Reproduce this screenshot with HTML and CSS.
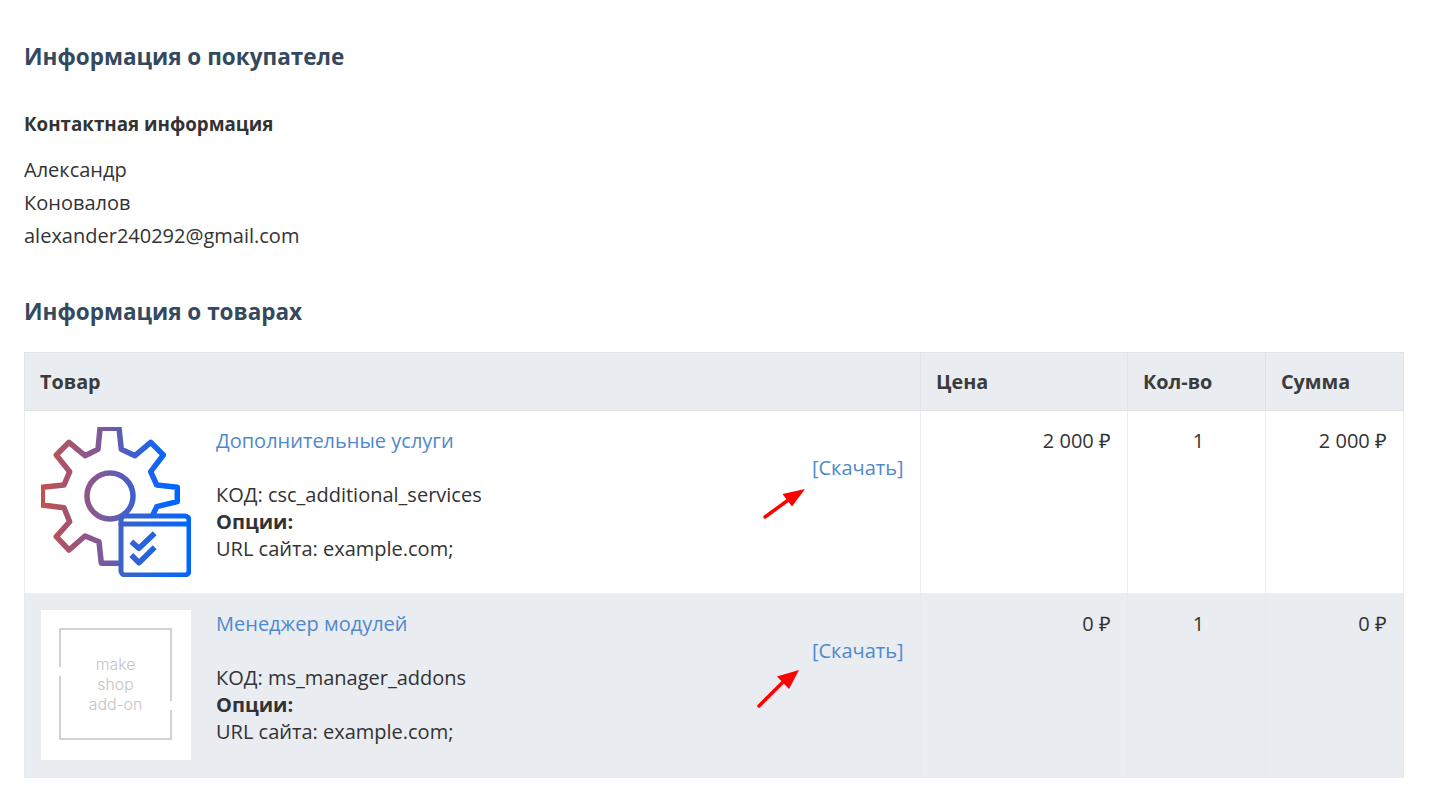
FILE: index.html
```html
<!DOCTYPE html>
<html lang="ru">
<head>
<meta charset="utf-8">
<title>Информация о покупателе</title>
<link rel="stylesheet" href="styles.css">
</head>
<body>
<main class="page">
  <h2 class="section-title">Информация о покупателе</h2>
  <h3 class="sub-title">Контактная информация</h3>
  <ul class="contact">
    <li>Александр</li>
    <li>Коновалов</li>
    <li>alexander240292@gmail.com</li>
  </ul>
  <h2 class="section-title products-title">Информация о товарах</h2>
  <table class="products">
    <colgroup>
      <col class="col-product"><col class="col-price"><col class="col-qty"><col class="col-sum">
    </colgroup>
    <thead>
      <tr><th>Товар</th><th>Цена</th><th>Кол-во</th><th>Сумма</th></tr>
    </thead>
    <tbody>
      <tr>
        <td class="cell-product">
          <div class="product">
            <svg class="thumb" viewBox="0 0 150 150" width="150" height="150" aria-hidden="true">
              <defs>
                <linearGradient id="gearGrad" gradientUnits="userSpaceOnUse" x1="0" y1="70" x2="125" y2="70">
                  <stop offset="0" stop-color="#c4504a"/>
                  <stop offset="0.5" stop-color="#7a5a9e"/>
                  <stop offset="1" stop-color="#0066ff"/>
                </linearGradient>
                <linearGradient id="winGrad" gradientUnits="userSpaceOnUse" x1="78" y1="120" x2="150" y2="120">
                  <stop offset="0" stop-color="#3f62c6"/>
                  <stop offset="1" stop-color="#0066ff"/>
                </linearGradient>
              </defs>
              <path class="gear" stroke="url(#gearGrad)" d="M78 136.3H60.3L58 114.7 44 109 28 123 15.3 109.7 28.7 94.7 23 80.7 1.300 78V60.3L23 58 28.7 44.7 15.3 28 28 15.3 44 28.7 57 22.3 59 1.300H78L80.3 22.3 94 28.7 109.7 15.3 122.3 28 109.7 44.7 115.7 58 136.3 60.3V74.7L115.7 79.7 112.3 87"/>
              <circle class="gear" stroke="url(#gearGrad)" cx="69" cy="69" r="23"/>
              <g class="gear win" stroke="url(#winGrad)">
                <rect x="80" y="89" width="68" height="59" rx="4"/>
                <path d="M80 97H148"/>
                <path class="check" d="M90.300 114.700 98 121.300 113.700 106.300"/>
                <path class="check" d="M90.300 128 98 135.700 113.700 120.300"/>
              </g>
            </svg>
            <div class="info">
              <a class="download" href="#">[Скачать]</a>
              <a class="name" href="#">Дополнительные услуги</a>
              <div class="blank"></div>
              <div>КОД: csc_additional_services</div>
              <div><b>Опции:</b></div>
              <div>URL сайта: example.com;</div>
            </div>
          </div>
          <svg class="arrow arrow-one" viewBox="0 0 44 32" width="44" height="32" aria-hidden="true">
            <path class="arrow-line" d="M2 30 L26 12.5"/>
            <path class="arrow-head" d="M42 2 L19.500 7 L29 19.500Z"/>
          </svg>
        </td>
        <td class="num">2 000 ₽</td>
        <td class="qty">1</td>
        <td class="num">2 000 ₽</td>
      </tr>
      <tr class="alt">
        <td class="cell-product">
          <div class="product">
            <svg class="thumb" viewBox="0 0 150 150" width="150" height="150" aria-hidden="true">
              <rect class="thumb-bg" width="150" height="150"/>
              <path class="frame" d="M19 57V19H130V91M130 100V129H19V66"/>
              <text class="thumb-text" x="74.500" y="60">make</text>
              <text class="thumb-text" x="74.500" y="80">shop</text>
              <text class="thumb-text" x="74.500" y="99.500">add-on</text>
            </svg>
            <div class="info">
              <a class="download" href="#">[Скачать]</a>
              <a class="name" href="#">Менеджер модулей</a>
              <div class="blank"></div>
              <div>КОД: ms_manager_addons</div>
              <div><b>Опции:</b></div>
              <div>URL сайта: example.com;</div>
            </div>
          </div>
          <svg class="arrow arrow-two" viewBox="0 0 44 40" width="44" height="40" aria-hidden="true">
            <path class="arrow-line" d="M2 38 L26 14"/>
            <path class="arrow-head" d="M42 2 L20 8.500 L32 21Z"/>
          </svg>
        </td>
        <td class="num">0 ₽</td>
        <td class="qty">1</td>
        <td class="num">0 ₽</td>
      </tr>
    </tbody>
  </table>
</main>
</body>
</html>
```
FILE: styles.css
```css
* { box-sizing: border-box; }
html, body { margin: 0; padding: 0; background: #fff; }
body {
  font-family: "Open Sans", sans-serif;
  font-size: 20px;
  line-height: 27px;
  color: #333;
}
.page { padding: 40px 38px 16px 24px; }
.section-title {
  margin: 0;
  font-size: 22.5px;
  line-height: 33px;
  font-weight: 700;
  color: #34495e;
}
.sub-title {
  margin: 37px 0 0;
  font-size: 18.75px;
  line-height: 27px;
  font-weight: 700;
  color: #333;
}
.contact { list-style: none; margin: 16px 0 0; padding: 0; line-height: 33px; }
.products-title { margin-top: 43px; }
.products {
  margin-top: 24px;
  width: 1379px;
  border-collapse: collapse;
  table-layout: fixed;
}
.col-product { width: 896px; }
.col-price { width: 207px; }
.col-qty { width: 138px; }
.col-sum { width: 138px; }
.products th {
  background: #e9ecf1;
  border: 1px solid #dfe3e8;
  padding: 15px 16px 15px 15px;
  text-align: left;
  font-size: 19.8px;
  font-weight: 700;
  color: #3b3b3b;
}
.products td {
  border: 1px solid #ebedf0;
  padding: 16px;
  vertical-align: top;
}
.products .alt td { background: #e9ecf1; border-color: #e6e9ee; padding-bottom: 17px; }
.cell-product { position: relative; }
.product { display: flex; gap: 25px; }
.thumb { flex: none; display: block; }
.thumb-bg { fill: #fff; }
.gear { fill: none; stroke-width: 5.500; stroke-linejoin: round; stroke-linecap: round; }
.win { stroke-width: 5; }
.win .check { stroke-width: 5.500; stroke-linecap: butt; }
.frame { fill: none; stroke: #d2d2d2; stroke-width: 2; }
.thumb-text {
  font-family: Inter, sans-serif;
  font-size: 15.8px;
  font-weight: 300;
  fill: #c4c4c4;
  text-anchor: middle;
}
.info { flex: 1; min-width: 0; }
.info a { color: #5089cb; text-decoration: none; }
.info b { font-weight: 700; }
.name { display: block; }
.blank { height: 27px; }
.download { float: right; margin: 27px 0.500px 0 0; }
.num { text-align: right; }
.products .qty { text-align: center; padding-left: 20px; }
.arrow { position: absolute; overflow: visible; }
.arrow-one { left: 738px; top: 76px; }
.arrow-two { left: 732px; top: 74px; }
.arrow-line { fill: none; stroke: #f00; stroke-width: 3.500; stroke-linecap: round; }
.arrow-head { fill: #f00; }
```
